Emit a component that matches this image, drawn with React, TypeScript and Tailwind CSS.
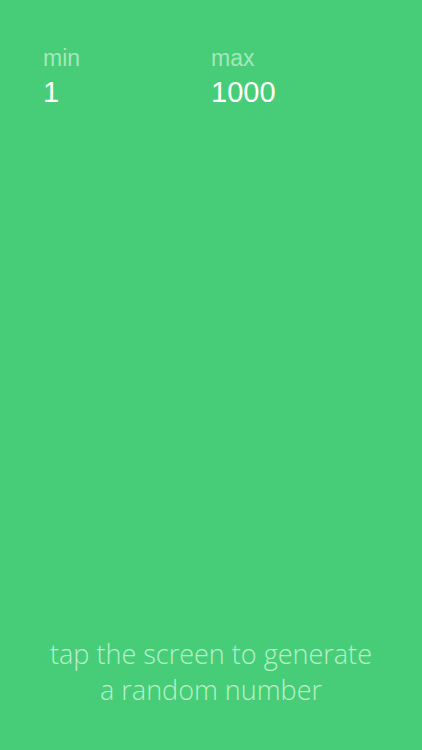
export default function App() {
  return (
    <div className="h-[750px] w-full bg-[#47cd78] flex flex-col justify-between select-none">
      <div className="flex pt-[43px] pl-[43px] font-['Liberation_Sans',sans-serif]">
        <div className="w-[168px]">
          <div className="text-[23px] leading-[30px] text-[#a3e8bb]">min</div>
          <div className="text-[29px] leading-[38px] text-white">1</div>
        </div>
        <div>
          <div className="text-[23px] leading-[30px] text-[#a3e8bb]">max</div>
          <div className="text-[29px] leading-[38px] text-white">1000</div>
        </div>
      </div>
      <div className="pb-[42px] text-center font-['Open_Sans',sans-serif] font-light text-[27px] leading-[36px] text-[#b9f0c9]">
        tap the screen to generate
        <br />
        a random number
      </div>
    </div>
  );
}
